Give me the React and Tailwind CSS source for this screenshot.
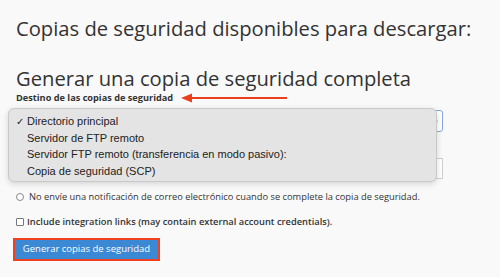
import React from "react";

export default function App() {
  return (
    <div className="w-[500px] h-[277px] bg-[#f9f9f9] overflow-hidden relative text-[#333]" style={{ fontFamily: '"Open Sans", sans-serif' }}>
      <div className="pl-4 pt-[14px] flex flex-col">
        <h1 className="text-[20.2px] leading-[28px] font-normal whitespace-nowrap">Copias de seguridad disponibles para descargar:</h1>
        <h2 className="mt-[22px] text-[20.2px] leading-[28px] font-normal whitespace-nowrap">Generar una copia de seguridad completa</h2>
        <div className="flex items-center h-[14px] mt-[-1px]">
          <span className="text-[9.2px] font-bold leading-[14px] whitespace-nowrap">Destino de las copias de seguridad</span>
          <svg width="108" height="10" viewBox="0 0 108 10" className="ml-[8px]">
            <line x1="6" y1="5" x2="106" y2="5" stroke="#ea3f1c" strokeWidth="2" />
            <path d="M0 5 L11 0.5 L11 9.5 Z" fill="#ea3f1c" />
          </svg>
        </div>
        <div className="mt-[5px] w-[427px] h-[22px] border border-[#7fa9dd] rounded-[3px] bg-white flex items-center justify-end pr-[4px]">
          <span className="text-[7px] leading-none text-[#333]">▾</span>
        </div>
        <div className="mt-[26px] w-[427px] h-[21px] border border-[#d0d0d0] bg-white" />
        <div className="mt-[10px] flex items-center h-[16px]">
          <span className="w-[8px] h-[8px] rounded-full border border-[#888] bg-white" />
          <span className="ml-[5px] text-[9.3px] leading-[14px] whitespace-nowrap">No envíe una notificación de correo electrónico cuando se complete la copia de seguridad.</span>
        </div>
        <div className="mt-[9px] flex items-center h-[16px]">
          <span className="w-[8px] h-[8px] rounded-[1px] border border-[#777] bg-white" />
          <span className="ml-[3px] text-[9.3px] leading-[14px] font-semibold whitespace-nowrap">Include integration links (may contain external account credentials).</span>
        </div>
        <div className="mt-[8px] ml-[-3px] w-[147px] h-[23px] border-2 border-[#f0401f] flex">
          <div className="flex-1 bg-[#3b88d4] flex items-center justify-center text-white text-[9.5px] whitespace-nowrap">Generar copias de seguridad</div>
        </div>
      </div>

      <div className="absolute left-[8px] top-[108px] w-[429px] h-[74px] bg-[#e4e4e4] border border-[#c9c9c9] rounded-[6px] shadow-[0_2px_6px_rgba(0,0,0,0.15)] flex flex-col pt-[4px] text-[11px] text-[#222]" style={{ fontFamily: '"Liberation Sans", Arial, sans-serif' }}>
        {[
          ["✓", "Directorio principal"],
          ["", "Servidor de FTP remoto"],
          ["", "Servidor FTP remoto (transferencia en modo pasivo):"],
          ["", "Copia de seguridad (SCP)"],
        ].map(([c, t]) => (
          <div key={t} className="flex items-center h-[16.5px]">
            <span className="w-[18px] pl-[7px] text-[10px]">{c}</span>
            <span className="whitespace-nowrap">{t}</span>
          </div>
        ))}
      </div>
    </div>
  );
}
